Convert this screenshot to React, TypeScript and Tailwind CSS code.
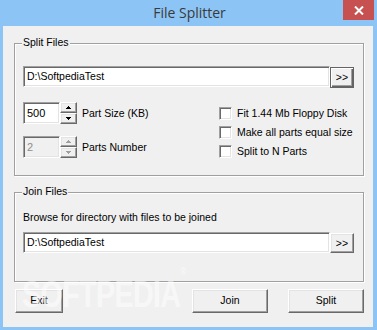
import React from "react";

// sunken edit field (classic 3D look)
const sunken =
  "border-t border-l border-t-[#a0a0a0] border-l-[#a0a0a0] border-b border-r border-b-white border-r-white shadow-[inset_1px_1px_0_#696969,inset_-1px_-1px_0_#e3e3e3]";

// raised push button
const raised =
  "border-t border-l border-t-white border-l-white border-b border-r border-b-[#696969] border-r-[#696969] shadow-[inset_-1px_-1px_0_#a0a0a0,inset_1px_1px_0_#e3e3e3] bg-[#f0f0f0]";

const Frame: React.FC<{ title: string; className?: string; children: React.ReactNode }> = ({
  title,
  className,
  children,
}) => (
  <div
    className={
      "relative w-[350px] border border-[#a0a0a0] shadow-[1px_1px_0_#fff,inset_1px_1px_0_#fff] " +
      (className ?? "")
    }
  >
    <span className="absolute left-[7px] top-[-8px] bg-[#f0f0f0] px-[1px] leading-[13px]">{title}</span>
    {children}
  </div>
);

const PathRow: React.FC<{ focused?: boolean }> = ({ focused }) => (
  <div className="flex items-start">
    <div className={`w-[307px] h-[21px] bg-white ${sunken} flex items-center pl-[3px] leading-[13px]`}>
      D:\SoftpediaTest
    </div>
    {focused ? (
      <div className="mt-[1px] w-[24px] h-[21px] border border-[#646464] bg-[#f0f0f0] shadow-[inset_1px_1px_0_#fff,inset_-1px_-1px_0_#646464,inset_-2px_-2px_0_#a0a0a0] flex items-center justify-center pb-[1px] leading-[13px]">
        &gt;&gt;
      </div>
    ) : (
      <div className={`mt-[1px] w-[24px] h-[20px] ${raised} flex items-center justify-center leading-[13px]`}>
        &gt;&gt;
      </div>
    )}
  </div>
);

const Spin: React.FC<{ value: string; label: string; disabled?: boolean }> = ({ value, label, disabled }) => {
  const arrow = disabled ? "#a0a0a0" : "#000";
  return (
    <div className="flex items-center">
      <div
        className={`w-[37px] h-[22px] ${sunken} ${disabled ? "bg-[#f0f0f0] text-[#8d8d8d]" : "bg-white"} flex items-center pl-[3px] leading-[13px] text-[11px]`}
      >
        {value}
      </div>
      <div className="flex flex-col w-[17px] h-[22px]">
        <div className={`h-[11px] ${raised} flex items-center justify-center`}>
          <svg width="5" height="3" viewBox="0 0 5 3">
            <path d="M2 0h1v1h1v1h1v1H0V2h1V1h1z" fill={arrow} />
          </svg>
        </div>
        <div className={`h-[11px] ${raised} flex items-center justify-center`}>
          <svg width="5" height="3" viewBox="0 0 5 3">
            <path d="M0 0h5v1H4v1H3v1H2V2H1V1H0z" fill={arrow} />
          </svg>
        </div>
      </div>
      <span className="ml-[5px] leading-[13px]">{label}</span>
    </div>
  );
};

const Check: React.FC<{ label: string }> = ({ label }) => (
  <div className="flex items-center h-[13px]">
    <div className={`w-[13px] h-[13px] bg-white ${sunken}`} />
    <span className="ml-[5px] leading-[13px]">{label}</span>
  </div>
);

const App: React.FC = () => {
  return (
    <div className="w-[377px] h-[330px] bg-[#8cc5f5] flex flex-col font-['Liberation_Sans',Arial,sans-serif] text-[10.5px] text-black overflow-hidden">
      {/* Title bar */}
      <div className="relative h-[26px] flex items-center justify-center">
        <span className="font-['Open_Sans',sans-serif] text-[14px] text-[#3a3a3a] pb-[1px] pl-[2px]">File Splitter</span>
        <div className="absolute right-[3px] top-0 w-[31px] h-[20px] bg-[#c75050] flex items-center justify-center">
          <svg width="10" height="9" viewBox="0 0 10 9">
            <path d="M1 0.5L9 8.5M9 0.5L1 8.5" stroke="#fff" strokeWidth="2" />
          </svg>
        </div>
      </div>

      {/* Client area */}
      <div className="relative ml-[3px] mr-[4px] h-[301px] bg-[#f0f0f0] pl-[11px] pt-[17px]">
        <Frame title="Split Files" className="h-[133px] pl-[8px] pt-[22px]">
          <PathRow focused />
          <div className="flex mt-[14px]">
            <div className="w-[196px] flex flex-col gap-[12px]">
              <Spin value="500" label="Part Size (KB)" />
              <Spin value="2" label="Parts Number" disabled />
            </div>
            <div className="flex flex-col gap-[6px] mt-[5px]">
              <Check label="Fit 1.44 Mb Floppy Disk" />
              <Check label="Make all parts equal size" />
              <Check label="Split to N Parts" />
            </div>
          </div>
        </Frame>

        <Frame title="Join Files" className="mt-[16px] h-[90px] pl-[8px] pt-[18px]">
          <div className="leading-[13px]">Browse for directory with files to be joined</div>
          <div className="mt-[8px]">
            <PathRow />
          </div>
        </Frame>

        <div className="flex mt-[7px]">
          <div className={`ml-[1px] w-[48px] h-[24px] ${raised} flex items-center justify-center`}>Exit</div>
          <div className={`ml-[129px] w-[76px] h-[24px] ${raised} flex items-center justify-center`}>Join</div>
          <div className={`ml-[20px] w-[76px] h-[24px] ${raised} flex items-center justify-center`}>Split</div>
        </div>

        {/* watermark */}
        <div className="pointer-events-none absolute left-[19px] top-[251px] origin-left scale-x-[0.8] text-[36px] font-bold leading-none text-white/50 tracking-tight">
          SOFTPEDIA<sup className="text-[10px] align-top">®</sup>
        </div>
      </div>
    </div>
  );
};

export default App;
